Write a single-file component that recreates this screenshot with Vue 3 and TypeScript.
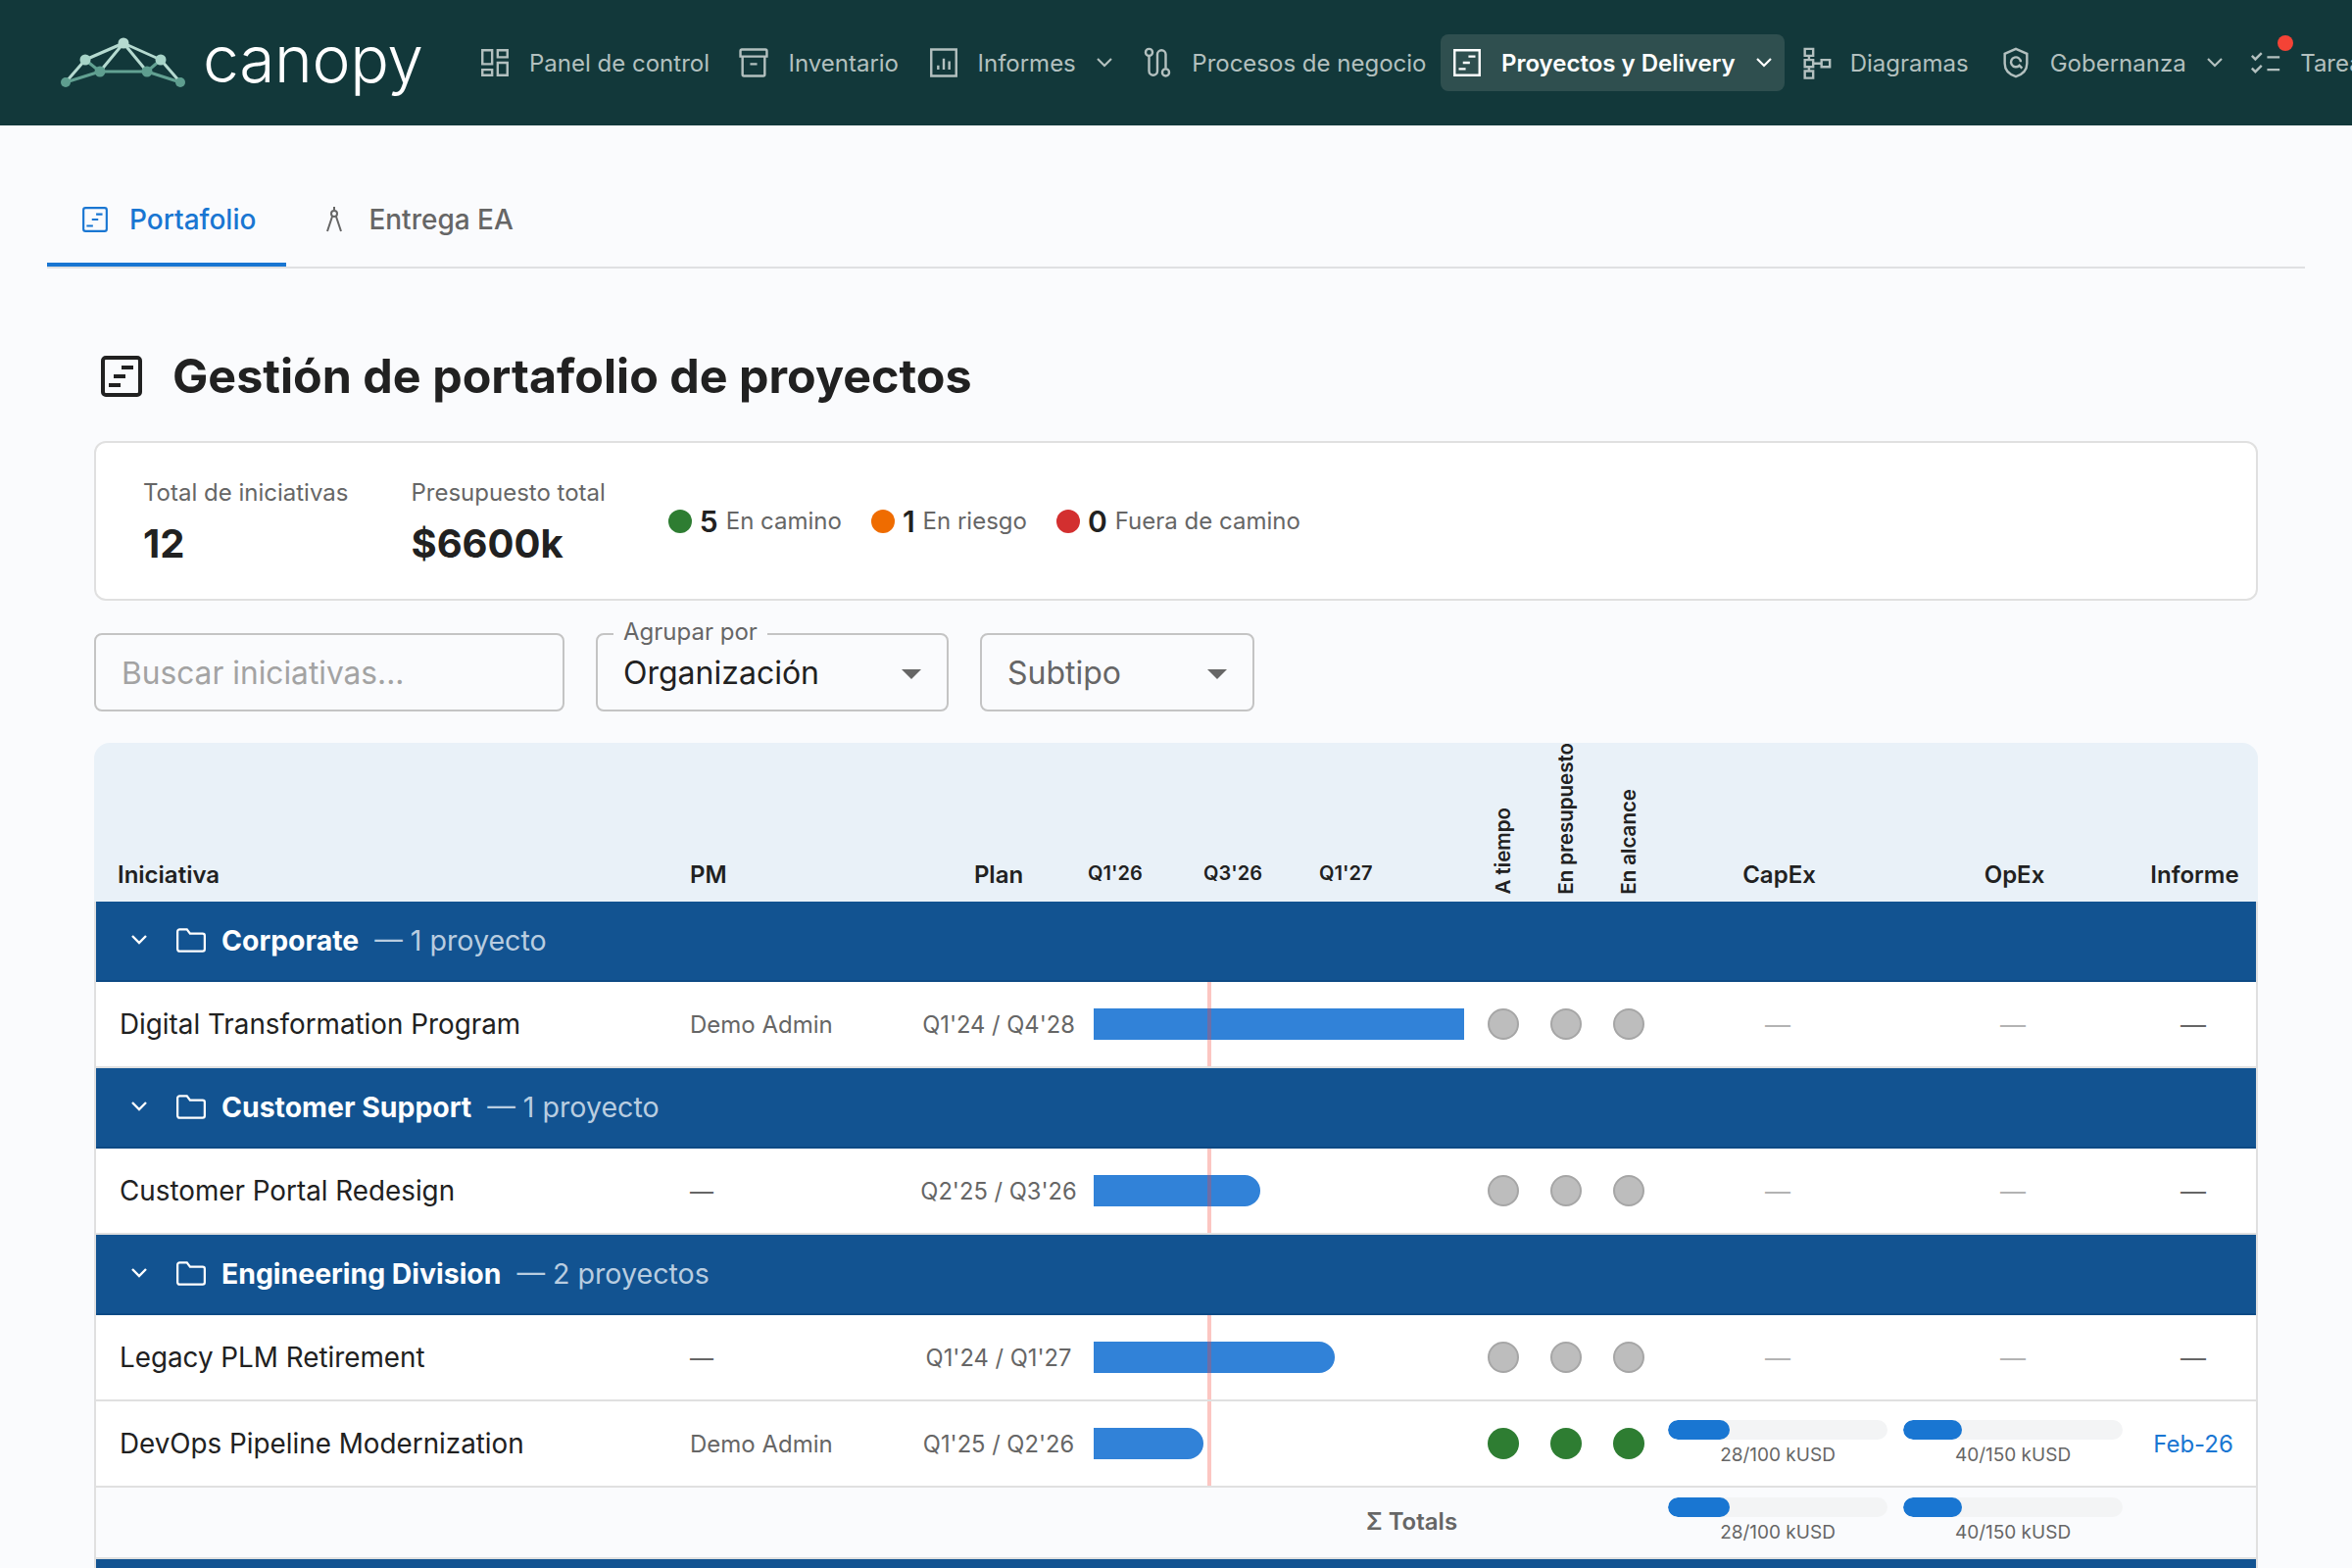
<template>
  <div class="page">
    <header class="topbar">
      <div class="logo">
        <svg class="logo-mark" viewBox="62 34 128 52" width="128" height="52">
          <g stroke="#b5dad0" stroke-width="3" fill="none">
            <path d="M126 40 87 57M126 40l38 17M126 40l-24 29M126 40l24 29M87 57 67 80M164 57l20 23" />
          </g>
          <g stroke="#62a192" stroke-width="3" fill="none">
            <path d="M87 57l15 12M164 57l-14 12M102 69h48M102 69 67 80M150 69l34 11" />
          </g>
          <circle cx="126" cy="40" r="5.5" fill="#b5dad0" />
          <circle cx="87" cy="57" r="5.5" fill="#a6d3c7" />
          <circle cx="164" cy="57" r="5.5" fill="#a6d3c7" />
          <circle cx="102" cy="69" r="5.5" fill="#5e9e8f" />
          <circle cx="150" cy="69" r="5.5" fill="#5e9e8f" />
          <circle cx="67" cy="80" r="5" fill="#5e9e8f" />
          <circle cx="184" cy="80" r="5" fill="#5e9e8f" />
        </svg>
        <span class="logo-text">canopy</span>
      </div>

      <nav class="menu">
        <a
          v-for="item in navItems"
          :key="item.label"
          class="menu-item"
          :class="{ active: item.active, tight: item.badge }"
        >
          <span class="menu-icon">
            <svg viewBox="0 0 24 24" width="34" height="34" fill="none" stroke="currentColor" stroke-width="1.7">
              <path :d="item.icon" />
              <circle v-for="(c, i) in item.circles || []" :key="i" :cx="c[0]" :cy="c[1]" :r="c[2]" />
            </svg>
            <i v-if="item.badge" class="menu-badge"></i>
          </span>
          <span>{{ item.label }}</span>
          <svg v-if="item.caret" class="menu-caret" viewBox="0 0 18 12" width="18" height="12" fill="none" stroke="currentColor" stroke-width="2.2">
            <path d="M2 2l7 7 7-7" />
          </svg>
        </a>
      </nav>
    </header>

    <main class="content">
      <div class="tabs">
        <a class="tab active">
          <svg viewBox="0 0 26 26" width="28" height="28" fill="none" stroke="currentColor" stroke-width="2">
            <rect x="2" y="2" width="22" height="22" rx="2" />
            <path d="M14 8h6M10 13h6M5 19h6" />
          </svg>
          Portafolio
        </a>
        <a class="tab second">
          <svg viewBox="0 0 18 26" width="18" height="26" fill="none" stroke="currentColor" stroke-width="2">
            <circle cx="9" cy="7" r="3" />
            <path d="M9 0v3M7 10 2 25M11 10l5 15" />
          </svg>
          Entrega EA
        </a>
      </div>

      <div class="title-row">
        <svg viewBox="0 0 42 42" width="42" height="42" fill="none" stroke="#212121" stroke-width="4">
          <rect x="2" y="2" width="38" height="38" rx="3" />
          <path d="M21 12h12M13 21h12M8 30h12" />
        </svg>
        <h1>Gestión de portafolio de proyectos</h1>
      </div>

      <section class="summary">
        <div class="stat">
          <div class="stat-label">Total de iniciativas</div>
          <div class="stat-value">12</div>
        </div>
        <div class="stat">
          <div class="stat-label">Presupuesto total</div>
          <div class="stat-value">$6600k</div>
        </div>
        <div class="health">
          <div v-for="h in health" :key="h.label" class="health-item">
            <i class="health-dot" :class="h.tone"></i>
            <b>{{ h.count }}</b>
            <span>{{ h.label }}</span>
          </div>
        </div>
      </section>

      <div class="filters">
        <div class="field search">Buscar iniciativas...</div>
        <div class="field select group-select">
          <span class="legend">Agrupar por</span>
          <span class="select-value">Organización</span>
          <i class="arrow"></i>
        </div>
        <div class="field select type-select">
          <span class="select-value muted">Subtipo</span>
          <i class="arrow"></i>
        </div>
      </div>

      <div class="grid-table">
        <div class="row head">
          <div class="cell first">Iniciativa</div>
          <div class="cell pm-head">PM</div>
          <div class="cell plan">Plan</div>
          <div class="cell gantt-head">
            <span style="left: -6px">Q1'26</span>
            <span style="left: 112px">Q3'26</span>
            <span style="left: 230px">Q1'27</span>
          </div>
          <div class="cell rotated"><span>A tiempo</span></div>
          <div class="cell rotated"><span>En presupuesto</span></div>
          <div class="cell rotated"><span>En alcance</span></div>
          <div class="cell center money-head">CapEx</div>
          <div class="cell center money-head">OpEx</div>
          <div class="cell center money-head">Informe</div>
        </div>

        <div class="table-body">
          <template v-for="group in groups" :key="group.name">
            <div class="group-row">
              <svg class="group-caret" viewBox="0 0 18 12" width="18" height="12" fill="none" stroke="#fff" stroke-width="2.4">
                <path d="M2 2l7 7 7-7" />
              </svg>
              <svg viewBox="0 0 30 26" width="32" height="28" fill="none" stroke="#fff" stroke-width="2.1">
                <path d="M2 5a2 2 0 0 1 2-2h7l3 4h12a2 2 0 0 1 2 2v13a2 2 0 0 1-2 2H4a2 2 0 0 1-2-2z" />
              </svg>
              <b>{{ group.name }}</b>
              <span>— {{ group.meta }}</span>
            </div>

            <div v-for="p in group.projects" :key="p.name" class="row item">
              <div class="cell first name">{{ p.name }}</div>
              <div class="cell pm" :class="{ none: !p.pm }">{{ p.pm || '—' }}</div>
              <div class="cell plan dates">{{ p.plan }}</div>
              <div class="cell gantt">
                <div class="bar" :class="{ open: p.barWidth === 378 }" :style="{ width: p.barWidth + 'px' }"></div>
                <i class="today"></i>
              </div>
              <div v-for="n in 3" :key="n" class="cell center">
                <i class="status" :class="{ ok: p.healthy }"></i>
              </div>
              <template v-if="p.capex && p.opex">
                <div class="cell center"><BudgetBar :item="p.capex" /></div>
                <div class="cell center"><BudgetBar :item="p.opex" /></div>
                <div class="cell center report">{{ p.report }}</div>
              </template>
              <template v-else>
                <div class="cell center dash">—</div>
                <div class="cell center dash">—</div>
                <div class="cell center dash dark">—</div>
              </template>
            </div>

            <div v-if="group.totals" class="row totals">
              <div class="totals-label">Σ Totals</div>
              <div class="cell center"><BudgetBar :item="group.totals.capex" /></div>
              <div class="cell center"><BudgetBar :item="group.totals.opex" /></div>
              <div></div>
            </div>
          </template>
          <div class="group-row last"></div>
        </div>
      </div>
    </main>
  </div>
</template>

<script setup lang="ts">
import { defineComponent, h as el, type PropType } from 'vue'

interface Budget {
  used: number
  total: number
}

interface Project {
  name: string
  pm?: string
  plan: string
  barWidth: number
  healthy?: boolean
  capex?: Budget
  opex?: Budget
  report?: string
}

interface Group {
  name: string
  meta: string
  projects: Project[]
  totals?: { capex: Budget; opex: Budget }
}

const BudgetBar = defineComponent({
  props: { item: { type: Object as PropType<Budget>, required: true } },
  setup(props) {
    return () =>
      el('div', { class: 'budget' }, [
        el('div', { class: 'budget-track' }, [
          el('div', { class: 'budget-fill', style: { width: `${(props.item.used / props.item.total) * 100}%` } })
        ]),
        el('div', { class: 'budget-text' }, `${props.item.used}/${props.item.total} kUSD`)
      ])
  }
})

const timeline = 'M3 3h18v18H3zM13 7.5h5M9 12h5M6 16.5h5'

const navItems = [
  { label: 'Panel de control', icon: 'M3 3h7v10H3zM14 3h7v5h-7zM3 17h7v4H3zM14 12h7v9h-7z' },
  { label: 'Inventario', icon: 'M3.5 2.5h17a1 1 0 0 1 1 1v4h-19v-4a1 1 0 0 1 1-1zM4 7.5v13a1 1 0 0 0 1 1h14a1 1 0 0 0 1-1v-13M9.5 13h5' },
  { label: 'Informes', icon: 'M3 2.5h18v19H3zM8 17v-3M12 17V9M16 17v-6', caret: true },
  {
    label: 'Procesos de negocio',
    icon: 'M6 7v11a3 3 0 0 0 6 0V6a3 3 0 0 1 6 0v10',
    circles: [[6, 4.5, 2.5], [18, 19, 2.5]]
  },
  { label: 'Proyectos y Delivery', icon: timeline, caret: true, active: true },
  {
    label: 'Diagramas',
    icon: 'M4 2h6v5H4zM4 10h6v5H4zM4 18h6v5H4zM16 10h6v5h-6zM7 7v3M7 15v3M10 12.5h6'
  },
  {
    label: 'Gobernanza',
    icon: 'M12 2l8 3.5v7c0 5-3.5 8-8 9.5-4.5-1.5-8-4.5-8-9.5v-7zM15.5 11.5a3.5 3.5 0 1 0-1 2.5l2 2',
    caret: true
  },
  { label: 'Tareas', icon: 'M2 7l2.5 2.5L9 5M2 16l2.5 2.5L9 14M13 8h9M13 17h9', badge: true }
]

const health = [
  { count: 5, label: 'En camino', tone: 'green' },
  { count: 1, label: 'En riesgo', tone: 'orange' },
  { count: 0, label: 'Fuera de camino', tone: 'red' }
]

const capex: Budget = { used: 28, total: 100 }
const opex: Budget = { used: 40, total: 150 }

const groups: Group[] = [
  {
    name: 'Corporate',
    meta: '1 proyecto',
    projects: [{ name: 'Digital Transformation Program', pm: 'Demo Admin', plan: "Q1'24 / Q4'28", barWidth: 378 }]
  },
  {
    name: 'Customer Support',
    meta: '1 proyecto',
    projects: [{ name: 'Customer Portal Redesign', plan: "Q2'25 / Q3'26", barWidth: 170 }]
  },
  {
    name: 'Engineering Division',
    meta: '2 proyectos',
    projects: [
      { name: 'Legacy PLM Retirement', plan: "Q1'24 / Q1'27", barWidth: 246 },
      {
        name: 'DevOps Pipeline Modernization',
        pm: 'Demo Admin',
        plan: "Q1'25 / Q2'26",
        barWidth: 112,
        healthy: true,
        capex,
        opex,
        report: 'Feb-26'
      }
    ],
    totals: { capex, opex }
  }
]
</script>

<style>
html,
body {
  height: 100%;
  overflow: hidden;
  background: #fafbfd;
}
.budget {
  width: 224px;
}
.budget-track {
  height: 20px;
  border-radius: 10px;
  background: #f3f4f5;
  overflow: hidden;
}
.budget-fill {
  height: 100%;
  border-radius: 10px;
  background: #1976d2;
}
.budget-text {
  margin-top: 4px;
  font-size: 19px;
  line-height: 24px;
  color: #666;
  text-align: center;
}
</style>

<style scoped>
.page {
  height: 1600px;
  overflow: hidden;
  font-family: Inter, 'Noto Sans', sans-serif;
  color: #212121;
  background: #fafbfd;
}

.topbar {
  display: flex;
  align-items: center;
  height: 128px;
  padding-left: 62px;
  background: #12383a;
  overflow: hidden;
}

.logo {
  display: flex;
  align-items: center;
  flex: none;
  gap: 17px;
}

.logo-text {
  font-size: 66px;
  font-weight: 300;
  line-height: 64px;
  letter-spacing: -0.4px;
  color: #fff;
  margin-top: -8px;
}

.menu {
  display: flex;
  align-items: center;
  flex: none;
  margin-left: 46.5px;
  gap: 4.5px;
}

.menu-item {
  display: flex;
  align-items: center;
  height: 58px;
  padding: 0 14px;
  gap: 18px;
  border-radius: 8px;
  font-size: 24px;
  white-space: nowrap;
  color: #b3c0bf;
}

.menu-item:nth-child(6) {
  padding-right: 16.5px;
}

.menu-item.active {
  margin-left: -4px;
  padding-right: 12.5px;
  background: #2f4f4f;
  color: #fff;
  font-weight: 600;
}

.menu-item.tight {
  margin-left: -2px;
}

.menu-icon {
  position: relative;
  display: flex;
  width: 30px;
}

.menu-icon svg {
  flex: none;
  margin-left: -4px;
}

.menu-badge {
  position: absolute;
  top: -11px;
  right: -11px;
  width: 16px;
  height: 16px;
  border-radius: 50%;
  background: #f44336;
}

.menu-caret {
  margin-left: 2px;
}

.content {
  padding: 74px 48px 0;
}

.tabs {
  display: flex;
  height: 70px;
  border-bottom: 2px solid #dfe0e2;
}

.tab {
  display: flex;
  align-items: center;
  gap: 21px;
  height: 70px;
  padding: 0 31px 22px 35px;
  border-bottom: 4px solid transparent;
  font-size: 28px;
  font-weight: 500;
  color: #666;
  box-sizing: border-box;
}

.tab.active {
  color: #1976d2;
  border-bottom-color: #1976d2;
}

.tab.second {
  gap: 26px;
  padding-left: 40px;
}

.title-row {
  display: flex;
  align-items: center;
  gap: 31px;
  height: 60px;
  margin: 80px 48px 36px 55px;
}

.title-row h1 {
  margin: 0;
  font-size: 48.4px;
  line-height: 60px;
  font-weight: 700;
}

.summary {
  display: flex;
  align-items: center;
  height: 163px;
  margin: 0 48px;
  padding: 0 48px;
  border: 2px solid #e0e0e0;
  border-radius: 12px;
  background: #fff;
  box-sizing: border-box;
}

.stat {
  margin-right: 64px;
  padding-top: 4px;
}

.stat-label {
  font-size: 24px;
  line-height: 32px;
  color: #666;
}

.stat-value {
  margin-top: 10px;
  font-size: 40px;
  line-height: 52px;
  font-weight: 700;
}

.health {
  display: flex;
  align-items: center;
  gap: 30px;
}

.health-item {
  display: flex;
  align-items: center;
  gap: 8px;
  font-size: 24px;
  color: #666;
}

.health-item b {
  font-size: 30px;
  font-weight: 600;
  color: #212121;
}

.health-dot {
  width: 24px;
  height: 24px;
  border-radius: 50%;
}

.health-dot.green { background: #2e7d32; }
.health-dot.orange { background: #ef6c00; }
.health-dot.red { background: #d32f2f; }

.filters {
  display: flex;
  gap: 32px;
  margin: 33px 48px 32px;
}

.field {
  position: relative;
  display: flex;
  align-items: center;
  height: 80px;
  padding: 0 26px;
  border: 2px solid #c4c4c4;
  border-radius: 8px;
  font-size: 32px;
  box-sizing: border-box;
}

.search {
  width: 480px;
  color: #a3a3a3;
  font-size: 31.7px;
}

.group-select { width: 360px; }
.type-select { width: 280px; }

.legend {
  position: absolute;
  top: -17px;
  left: 16px;
  padding: 0 10px;
  background: #fafbfd;
  font-size: 24px;
  line-height: 28px;
  color: #666;
}

.select-value.muted { color: #666; }

.arrow {
  position: absolute;
  right: 26px;
  top: 35px;
  border-left: 10px solid transparent;
  border-right: 10px solid transparent;
  border-top: 10px solid #666;
}

.grid-table {
  margin: 0 48px;
  border-radius: 16px 16px 0 0;
  overflow: hidden;
}

.table-body {
  border-left: 2px solid #e0e0e0;
  border-right: 2px solid #e0e0e0;
  background: #fff;
}

.row {
  display: grid;
  grid-template-columns: 582px 246px 190px 386px 64px 64px 64px 240px 240px 128px;
}

.head {
  height: 162px;
  padding-left: 2px;
  background: #e9f1f8;
  font-size: 24px;
  font-weight: 600;
}

.head .cell {
  align-items: flex-end;
  padding-bottom: 16px;
}

.cell {
  position: relative;
  display: flex;
  align-items: center;
  box-sizing: border-box;
}

.cell.first { padding-left: 22px; }
.cell.pm-head { padding-left: 24px; }
.cell.center { justify-content: center; }
.cell.plan { justify-content: center; padding-right: 4px; }
.head .money-head { padding-left: 3px; }

.head .rotated {
  justify-content: center;
  padding-bottom: 10px;
}

.rotated span {
  writing-mode: vertical-rl;
  transform: rotate(180deg);
  font-size: 20.5px;
  line-height: 24px;
  font-weight: 600;
  white-space: nowrap;
}

.gantt-head span {
  position: absolute;
  bottom: 19px;
  font-size: 20px;
  line-height: 26px;
  white-space: nowrap;
}

.group-row {
  display: flex;
  align-items: center;
  height: 82px;
  padding: 0 0 2px 35px;
  box-sizing: border-box;
  background: #125391;
  border-bottom: 2px solid #0d4a85;
  color: #b9cde0;
  font-size: 28.6px;
}

.group-row svg + svg {
  margin-left: 28px;
}

.group-row b {
  margin: 0 16px 0 15px;
  font-size: 28.4px;
  font-weight: 700;
  color: #fff;
}

.group-row.last {
  height: 60px;
}

.item {
  height: 88px;
  border-bottom: 2px solid #e0e0e0;
  box-sizing: border-box;
}

.item .name {
  font-size: 27.8px;
  padding-left: 24px;
}

.pm {
  padding-left: 24px;
  font-size: 24px;
  color: #666;
}

.dates {
  font-size: 23.7px;
  color: #666;
}

.bar {
  height: 32px;
  border-radius: 0 16px 16px 0;
  background: #3182d8;
}

.bar.open {
  border-radius: 0;
}

.today {
  position: absolute;
  left: 116px;
  top: 0;
  bottom: 0;
  width: 4px;
  background: rgba(244, 67, 54, 0.3);
}

.status {
  width: 32px;
  height: 32px;
  border: 2px solid #a6a6a6;
  border-radius: 50%;
  background: #bdbdbd;
  box-sizing: border-box;
}

.status.ok {
  border: none;
  background: #2e7d32;
}

.dash {
  font-size: 26px;
  color: #b3b3b3;
}

.dash.dark {
  color: #666;
}

.report {
  font-size: 24px;
  color: #1976d2;
}

.totals {
  height: 73px;
  background: #fafbfd;
  border-bottom: 2px solid #e0e0e0;
  box-sizing: border-box;
  grid-template-columns: 1596px 240px 240px 128px;
}

.totals-label {
  padding: 20px 0 0 1296px;
  font-size: 24px;
  font-weight: 600;
  color: #666;
  white-space: nowrap;
}

.totals .cell {
  align-items: flex-start;
  padding-top: 10px;
}
</style>
